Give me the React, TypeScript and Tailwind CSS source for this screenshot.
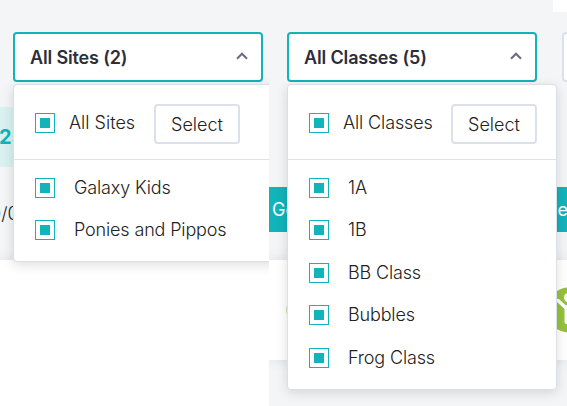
import type { ReactNode } from "react";

interface FilterDropdownProps {
  title: string;
  allLabel: string;
  items: string[];
  menuClassName: string;
  labelClassName: string;
}

function Checkbox() {
  return (
    <span className="flex h-5 w-5 shrink-0 items-center justify-center border border-[#12b3b9] bg-white">
      <span className="h-2.5 w-2.5 bg-[#12b3b9]" />
    </span>
  );
}

function FilterDropdown({
  title,
  allLabel,
  items,
  menuClassName,
  labelClassName,
}: FilterDropdownProps) {
  return (
    <div className="relative z-10 h-[50px] w-[250px] shrink-0">
      <button className="flex h-full w-full items-center justify-between rounded border-2 border-[#12b3b9] bg-white pr-[13px] pl-[15px] text-left text-[18px] font-semibold tracking-[-0.15px] text-[#2d2e3a]">
        <span>{title}</span>
        <svg width="12" height="8" viewBox="0 0 12 8" fill="none" className="-mt-0.5">
          <path d="M1 6.7L6 1.7L11 6.7" stroke="#6b6b80" strokeWidth="2" />
        </svg>
      </button>

      <div
        className={`absolute top-[52px] left-0 rounded border border-[#dcdfe6] bg-white shadow-[0_3px_12px_rgba(0,0,0,0.13)] ${menuClassName}`}
      >
        <div className="flex h-[75px] items-center border-b border-[#dfe1e4] pt-0.5 pl-[21px]">
          <Checkbox />
          <span className={`mb-0.5 ml-3.5 shrink-0 whitespace-nowrap ${labelClassName}`}>
            {allLabel}
          </span>
          <button className="mt-0.5 h-10 w-[86px] shrink-0 rounded border-2 border-[#dce0e8] text-[#222]">
            Select
          </button>
        </div>

        <ul className="pt-[6.3px] pl-[21px] tracking-[-0.15px]">
          {items.map((item) => (
            <li key={item} className="flex h-[42.5px] items-center">
              <Checkbox />
              <span className="mb-px ml-[19px]">{item}</span>
            </li>
          ))}
        </ul>
      </div>
    </div>
  );
}

function Pane({ className, children }: { className: string; children: ReactNode }) {
  return (
    <section className={`flex h-full flex-col overflow-hidden ${className}`}>
      {children}
    </section>
  );
}

function ChildBadge() {
  return (
    <svg width="46" height="46" viewBox="0 0 46 46" className="shrink-0">
      <circle cx="23" cy="23" r="22.5" fill="#95c23d" />
      <circle cx="23" cy="10.5" r="5" fill="#fff" />
      <path
        d="M12 13.5L19 20M34 13.5L27 20"
        stroke="#fff"
        strokeWidth="3.5"
        strokeLinecap="round"
      />
      <path
        d="M20.5 20V35M25.5 20V35M20.5 20H25.5V28H20.5Z"
        fill="#fff"
        stroke="#fff"
        strokeWidth="4"
        strokeLinecap="round"
        strokeLinejoin="round"
      />
    </svg>
  );
}

export default function App() {
  return (
    <main className="flex h-[406px] w-[567px] overflow-hidden bg-white font-['Inter',sans-serif] text-[18px] leading-[27px] font-light text-[#222]">
      <Pane className="w-[269px] shrink-0 bg-white">
        <div className="flex h-[260px] shrink-0 flex-col bg-[#f4f5f7]">
          <div className="pt-8 pl-[13px]">
            <FilterDropdown
              title="All Sites (2)"
              allLabel="All Sites"
              items={["Galaxy Kids", "Ponies and Pippos"]}
              menuClassName="h-[178px] w-[270px]"
              labelClassName="w-[85px]"
            />
          </div>
          <div className="mt-[25px] flex h-[60px] items-center bg-[#daf1f2] text-[20px] font-bold text-[#12b3b9]">
            <span className="-ml-px">25</span>
          </div>
          <div className="flex h-[93px] items-center">
            <span className="-ml-2.5">0</span>
            <span>/0</span>
          </div>
        </div>
        <div className="grow bg-white shadow-[0_0_12px_rgba(0,0,0,0.1)]" />
      </Pane>

      <Pane className="w-[298px] shrink-0 bg-[#f4f5f7]">
        <div className="h-3 w-3.5 shrink-0 self-end bg-white" />
        <div className="mt-5 flex shrink-0 gap-[25px] pl-[18px]">
          <FilterDropdown
            title="All Classes (5)"
            allLabel="All Classes"
            items={["1A", "1B", "BB Class", "Bubbles", "Frog Class"]}
            menuClassName="h-[306px] w-[270px]"
            labelClassName="w-[108px] tracking-[-0.12px]"
          />
          <div className="h-[50px] w-[250px] shrink-0 rounded border-2 border-[#dce0e8] bg-white" />
        </div>
        <div className="mt-[105px] flex h-[45px] shrink-0 items-center justify-between bg-[#12b3b9] pl-[3px] text-[18px] font-normal text-white">
          <span>Go</span>
          <span className="-mr-px">e</span>
        </div>
        <div className="mt-7 flex h-[100px] shrink-0 items-center gap-[214.5px] bg-white pl-[16.5px] shadow-[0_0_12px_rgba(0,0,0,0.1)]">
          <ChildBadge />
          <ChildBadge />
        </div>
      </Pane>
    </main>
  );
}
